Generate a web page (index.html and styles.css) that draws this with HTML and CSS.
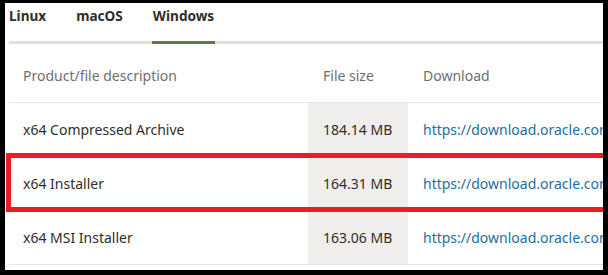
FILE: index.html
```html
<!DOCTYPE html>
<html>
<head>
<meta charset="utf-8">
<link rel="stylesheet" href="styles.css">
</head>
<body>
<div class="frame">
  <div class="tabs">
    <div class="tab">Linux</div>
    <div class="tab">macOS</div>
    <div class="tab active">Windows</div>
  </div>
  <table class="dl">
    <thead>
      <tr><th class="c1">Product/file description</th><th class="c2">File size</th><th class="c3">Download</th></tr>
    </thead>
    <tbody>
      <tr><td class="c1">x64 Compressed Archive</td><td class="c2 size">184.14 MB</td><td class="c3"><a href="#">https://download.oracle.com/java/17/latest/jdk-17_windows-x64_bin.zip</a></td></tr>
      <tr><td class="c1">x64 Installer</td><td class="c2 size">164.31 MB</td><td class="c3"><a href="#">https://download.oracle.com/java/17/latest/jdk-17_windows-x64_bin.exe</a></td></tr>
      <tr><td class="c1">x64 MSI Installer</td><td class="c2 size">163.06 MB</td><td class="c3"><a href="#">https://download.oracle.com/java/17/latest/jdk-17_windows-x64_bin.msi</a></td></tr>
    </tbody>
  </table>
  <div class="highlight"></div>
</div>
</body>
</html>
```
FILE: styles.css
```css
html, body {
  margin: 0;
  padding: 0;
  background: #000;
  height: 275px;
  overflow: hidden;
}
.frame {
  position: relative;
  margin: 3px 5px 0 5px;
  height: 267px;
  background: #fff;
  overflow: hidden;
  padding-left: 4px;
  font-family: "Noto Sans", sans-serif;
  color: #312d2a;
}
.tabs {
  display: flex;
  border-bottom: 3px solid #e4e1dd;
  height: 38px;
}
.tab {
  font-size: 13.6px;
  font-weight: bold;
  line-height: 16px;
  padding-top: 5px;
  margin-right: 30px;
  box-sizing: border-box;
  height: 38px;
  position: relative;
}
.tab.active::after {
  content: "";
  position: absolute;
  left: -1px;
  right: -1px;
  bottom: -3px;
  height: 3px;
  background: #5e7a4e;
}
.dl {
  border-collapse: collapse;
  table-layout: fixed;
  width: 900px;
  font-size: 14px;
}
.dl th, .dl td {
  text-align: left;
  white-space: nowrap;
  padding: 0 0 0 14px;
  border-bottom: 1px solid #e5e5e5;
  vertical-align: middle;
}
.dl th {
  font-weight: normal;
  color: #6f6f6f;
  height: 54px;
  padding-top: 4px;
}
.dl td {
  height: 53px;
}
.c1 { width: 285px; }
.c2 { width: 85px; padding-left: 15px !important; }
.c3 { width: auto; padding-left: 15px !important; }
.size { background: #f0eeec; }
.dl a {
  color: #1d6f9d;
  text-decoration: none;
}
.highlight {
  position: absolute;
  left: 1px;
  top: 150px;
  width: 620px;
  height: 49px;
  border: 5px solid #ed1c24;
}
```
